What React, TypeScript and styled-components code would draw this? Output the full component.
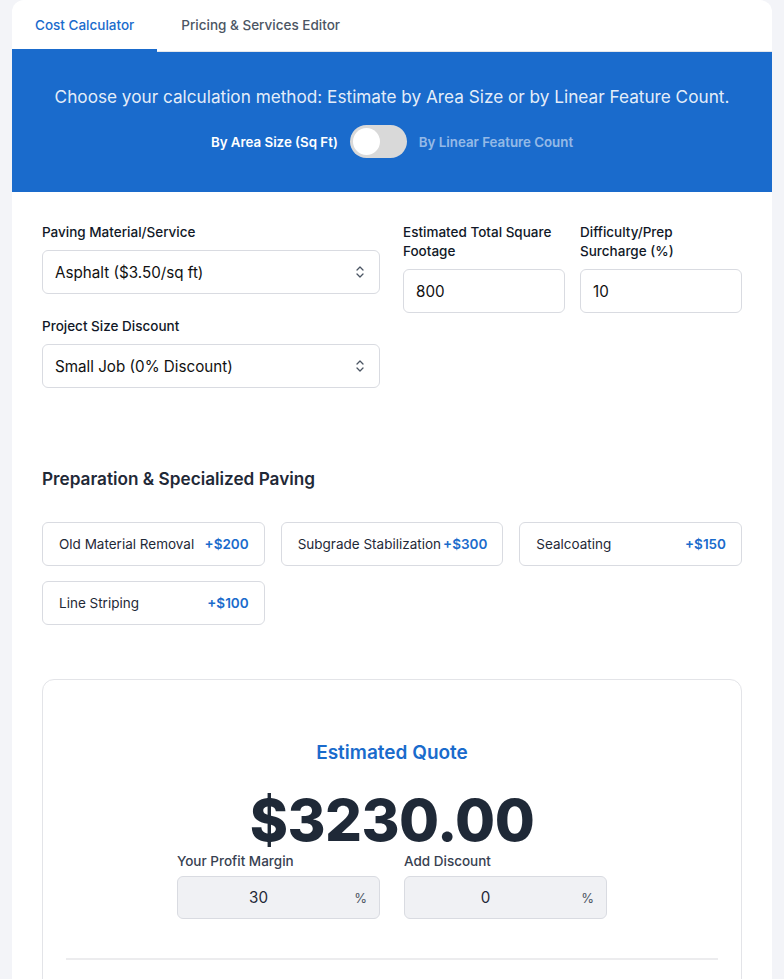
import React from 'react';
import styled, { createGlobalStyle } from 'styled-components';

const GlobalStyle = createGlobalStyle`
  html, body {
    margin: 0;
    padding: 0;
    background: #f3f4f8;
    font-family: Inter, "Noto Sans", "Liberation Sans", sans-serif;
    color: #111827;
  }
  * { box-sizing: border-box; }
`;

const Page = styled.div`
  padding: 0 12px;
`;

const Card = styled.div`
  background: #fff;
  border-radius: 12px;
  overflow: hidden;
  min-height: 1000px;
`;

const Tabs = styled.div`
  display: flex;
  border-bottom: 1px solid #e5e7eb;
  height: 52px;
`;

const Tab = styled.button<{ $active?: boolean }>`
  border: 0;
  background: none;
  font-family: inherit;
  font-size: 13.5px;
  font-weight: 500;
  padding: 0 23px;
  height: 52px;
  color: ${p => (p.$active ? '#1a6bcc' : '#4b5563')};
  border-bottom: 3px solid ${p => (p.$active ? '#1a6bcc' : 'transparent')};
  cursor: pointer;
  padding-top: 1px;
  &:nth-child(2) { padding-left: 24px; }
`;

const Banner = styled.div`
  background: #1a6bcc;
  height: 140px;
  display: flex;
  flex-direction: column;
  align-items: center;
  padding-top: 33px;
`;

const BannerText = styled.p`
  margin: 0;
  font-size: 17.2px;
  color: rgba(255, 255, 255, 0.9);
  line-height: 24px;
`;

const ToggleRow = styled.div`
  display: flex;
  align-items: center;
  gap: 12px;
  margin-top: 16px;
`;

const ToggleLabel = styled.span<{ $on?: boolean }>`
  font-size: 13.3px;
  font-weight: 600;
  color: ${p => (p.$on ? '#fff' : 'rgba(255,255,255,0.55)')};
`;

const Track = styled.div`
  width: 57px;
  height: 33px;
  border-radius: 17px;
  background: #d9d9d9;
  padding: 3px;
  display: flex;
`;

const Knob = styled.div`
  width: 27px;
  height: 27px;
  border-radius: 50%;
  background: #fff;
`;

const Body = styled.div`
  padding: 31px 30px 0;
`;

const FormGrid = styled.div`
  display: grid;
  grid-template-columns: 338px 1fr;
  column-gap: 23px;
`;

const Column = styled.div`
  display: flex;
  flex-direction: column;
  gap: 23px;
`;

const Pair = styled.div`
  display: grid;
  grid-template-columns: 1fr 1fr;
  column-gap: 15px;
  align-items: start;
`;

const Field = styled.div`
  display: flex;
  flex-direction: column;
  gap: 8px;
`;

const Label = styled.label`
  font-size: 13.5px;
  font-weight: 500;
  line-height: 19px;
  color: #111827;
`;

const SelectBox = styled.div`
  height: 44px;
  border: 1px solid #d9dbe1;
  border-radius: 6px;
  display: flex;
  align-items: center;
  justify-content: space-between;
  padding: 0 14px 0 12px;
  font-size: 15.2px;
  color: #111;
`;

const InputBox = styled.div`
  height: 44px;
  border: 1px solid #d9dbe1;
  border-radius: 6px;
  display: flex;
  align-items: center;
  padding: 0 12px;
  font-size: 15.2px;
  color: #111;
`;

const SectionTitle = styled.h3`
  margin: 79px 0 0;
  font-size: 17.2px;
  font-weight: 600;
  color: #1f2937;
  line-height: 24px;
`;

const AddonGrid = styled.div`
  margin-top: 31px;
  display: grid;
  grid-template-columns: repeat(3, 1fr);
  gap: 15px 16px;
`;

const Addon = styled.button`
  height: 44px;
  border: 1px solid #d9dbe1;
  border-radius: 6px;
  background: #fff;
  display: flex;
  align-items: center;
  justify-content: space-between;
  padding: 0 15px 0 16px;
  font-family: inherit;
  font-size: 13.5px;
  color: #1f2937;
  cursor: pointer;
`;

const Price = styled.span`
  color: #1a6bcc;
  font-weight: 600;
`;

const QuoteCard = styled.div`
  margin-top: 54px;
  border: 1px solid #e3e4e8;
  border-radius: 12px;
  padding: 61px 23px 0;
  display: flex;
  flex-direction: column;
  align-items: center;
  height: 320px;
`;

const QuoteTitle = styled.h2`
  margin: 0;
  font-size: 19px;
  font-weight: 600;
  color: #1a6bcc;
  line-height: 24px;
`;

const QuoteAmount = styled.div`
  font-size: 58px;
  font-weight: 800;
  color: #1f2937;
  line-height: 44px;
  margin-top: 33px;
  letter-spacing: -0.5px;
`;

const AdjustRow = styled.div`
  display: flex;
  gap: 24px;
  margin-top: 10px;
`;

const AdjustField = styled.div`
  display: flex;
  flex-direction: column;
  gap: 6px;
  width: 203px;
`;

const AdjustLabel = styled.label`
  font-size: 13.5px;
  font-weight: 500;
  color: #374151;
  line-height: 18px;
`;

const AdjustInput = styled.div`
  height: 43px;
  border: 1px solid #d9dbe1;
  border-radius: 6px;
  background: #f0f1f4;
  display: flex;
  align-items: center;
  padding: 0 52px 0 12px;
  font-size: 15.2px;
  color: #1f2937;
  position: relative;
  justify-content: center;
  span {
    position: absolute;
    right: 12px;
    font-size: 13px;
    color: #4b5563;
  }
`;

const Divider = styled.hr`
  align-self: stretch;
  border: 0;
  border-top: 2px solid #ececee;
  margin: 39px 0 0;
`;

const Chevrons = () => (
  <svg width="10" height="14" viewBox="0 0 10 14" fill="none" stroke="#4b5563" strokeWidth="1.3" strokeLinecap="round" strokeLinejoin="round">
    <path d="M2 5 L5 2 L8 5" />
    <path d="M2 9 L5 12 L8 9" />
  </svg>
);

const addons = [
  { name: 'Old Material Removal', price: 200 },
  { name: 'Subgrade Stabilization', price: 300 },
  { name: 'Sealcoating', price: 150 },
  { name: 'Line Striping', price: 100 },
];

export default function App() {
  return (
    <Page>
      <GlobalStyle />
      <Card>
        <Tabs>
          <Tab $active>Cost Calculator</Tab>
          <Tab>Pricing &amp; Services Editor</Tab>
        </Tabs>
        <Banner>
          <BannerText>Choose your calculation method: Estimate by Area Size or by Linear Feature Count.</BannerText>
          <ToggleRow>
            <ToggleLabel $on>By Area Size (Sq Ft)</ToggleLabel>
            <Track><Knob /></Track>
            <ToggleLabel>By Linear Feature Count</ToggleLabel>
          </ToggleRow>
        </Banner>
        <Body>
          <FormGrid>
            <Column>
              <Field>
                <Label>Paving Material/Service</Label>
                <SelectBox>Asphalt ($3.50/sq ft)<Chevrons /></SelectBox>
              </Field>
              <Field>
                <Label>Project Size Discount</Label>
                <SelectBox>Small Job (0% Discount)<Chevrons /></SelectBox>
              </Field>
            </Column>
            <Pair>
              <Field>
                <Label>Estimated Total Square Footage</Label>
                <InputBox>800</InputBox>
              </Field>
              <Field>
                <Label>Difficulty/Prep Surcharge (%)</Label>
                <InputBox>10</InputBox>
              </Field>
            </Pair>
          </FormGrid>

          <SectionTitle>Preparation &amp; Specialized Paving</SectionTitle>
          <AddonGrid>
            {addons.map(a => (
              <Addon key={a.name}>
                <span>{a.name}</span>
                <Price>+${a.price}</Price>
              </Addon>
            ))}
          </AddonGrid>

          <QuoteCard>
            <QuoteTitle>Estimated Quote</QuoteTitle>
            <QuoteAmount>$3230.00</QuoteAmount>
            <AdjustRow>
              <AdjustField>
                <AdjustLabel>Your Profit Margin</AdjustLabel>
                <AdjustInput>30<span>%</span></AdjustInput>
              </AdjustField>
              <AdjustField>
                <AdjustLabel>Add Discount</AdjustLabel>
                <AdjustInput>0<span>%</span></AdjustInput>
              </AdjustField>
            </AdjustRow>
            <Divider />
          </QuoteCard>
        </Body>
      </Card>
    </Page>
  );
}
